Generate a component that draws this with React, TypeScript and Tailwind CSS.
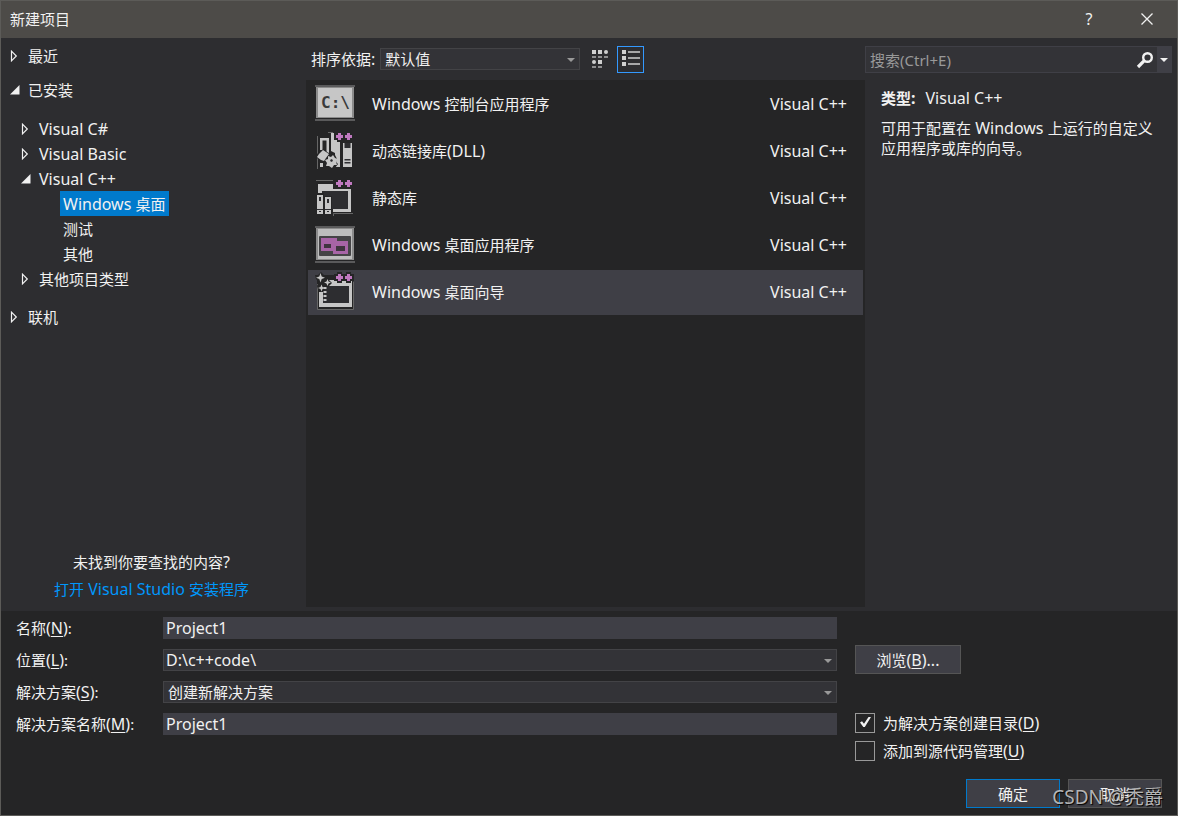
import { useState } from 'react'
import type { ReactNode } from 'react'

interface TemplateItem {
  id: string
  name: string
  icon: ReactNode
}

// Latin runs are set one step larger than the Chinese text around them
function Mixed({ text }: { text: string }) {
  return (
    <>
      {text.split(/([\x20-\x7e]+)/).map((part, i) =>
        i % 2 === 1 ? (
          <span key={i} className="text-base/5">
            {part}
          </span>
        ) : (
          part
        ),
      )}
    </>
  )
}

function AccessLabel({ text, accessKey }: { text: string; accessKey: string }) {
  return (
    <>
      {text}
      <span className="text-base/5">
        (<u className="underline-offset-2">{accessKey}</u>)
      </span>
    </>
  )
}

function TreeArrow({ open }: { open: boolean }) {
  return (
    <svg width="10" height="12" viewBox="0 0 10 12" className="shrink-0">
      {open ? (
        <path d="M9.5 1v9.500H0z" fill="#f1f1f1" />
      ) : (
        <path d="M1.500 1.200v9.600L6.300 6z" fill="none" stroke="#f1f1f1" strokeWidth="1.200" />
      )}
    </svg>
  )
}

function Caret({ className }: { className: string }) {
  return (
    <svg width="8" height="4" viewBox="0 0 8 4" className={className}>
      <path d="M0 0h8L4 4z" fill="currentColor" />
    </svg>
  )
}

function PlusPlus() {
  return (
    <>
      <path d="M19 2h3V0h5v2h4V0h5v2h3v7h-3v2h-5V9h-4v2h-5V9h-3z" fill="#252526" />
      <path
        d="M23 2h3v2h2v3h-2v2h-3V7h-2V4h2zM32 2h3v2h2v3h-2v2h-3V7h-2V4h2z"
        fill="#c079c0"
      />
    </>
  )
}

function ConsoleIcon() {
  return (
    <svg width="40" height="40" viewBox="0 0 40 40">
      <path d="M0 1h40v2H0zM0 35h40v2H0z" fill="#5a5a5b" />
      <rect x="1" y="3" width="38" height="31" fill="#8b8b8b" />
      <rect x="3" y="4" width="34" height="29" fill="#c6c6c6" />
      <text
        x="6"
        y="24"
        fontSize="16"
        fontWeight="700"
        fill="#3a3a3b"
        fontFamily="'DejaVu Sans Mono', monospace"
      >
        {'C:\\'}
      </text>
    </svg>
  )
}

function DllIcon() {
  return (
    <svg width="40" height="40" viewBox="0 0 40 40">
      <path d="M2.500 5v33M13 1.500h5" stroke="#666" fill="none" />
      <path d="M5 7h9v15h-2.500V9.500h-4V19H5z" fill="#c6c6c6" />
      <path d="M16 2h4v7h5v27h-5V22l-4-2z" fill="#c6c6c6" />
      <path d="M28 12h9v24h-9z" fill="#c6c6c6" />
      <path d="M29.500 12h6v5h-6zM29.500 28h6v1.500h-6zM29.500 31h6v1.500h-6z" fill="#2d2d30" />
      <PlusPlus />
      <path
        d="M7 19l2-1 3 3 2 1 1 3 3-2 2 1 2 4-1 3 2 2-3 4-4 1-4-2-3 0 1-5-2-2-3 1-4-4 1-3z"
        fill="#252526"
      />
      <path d="M8 19l3 2 3 2-3 4-2 3-3-1-4-3 2-3z" fill="#c6c6c6" />
      <path
        d="M13 25l3 1 2-2 2 3 3 1-2 3 1 3-3 0-2 3-3-2-3 0 1-3-2-3 3-1z"
        fill="#c6c6c6"
      />
      <path d="M15 29l2-1 1 2-2 1z" fill="#2d2d30" />
      <path d="M5 32h3v4H5z" fill="#c6c6c6" />
    </svg>
  )
}

function StaticLibIcon() {
  return (
    <svg width="40" height="40" viewBox="0 0 40 40">
      <path d="M1 2.500h17M18.500 38v-2.500H38" stroke="#666" fill="none" />
      <path d="M3 6h15v5h18v23H18v-3h15V13H7v3H3z" fill="#c6c6c6" />
      <path d="M7 13h26v18H7z" fill="#2d2d30" />
      <path d="M1 15h8v3h8v19H1z" fill="#252526" />
      <path d="M2 17h6v19H2zM10 19h6v17h-6z" fill="#c6c6c6" />
      <path
        d="M4 19h2v4H4zM12 21h2v4h-2zM2 31h6v1H2zM10 31h6v1h-6zM4 33h2v1H4zM12 33h2v1h-2z"
        fill="#2d2d30"
      />
      <PlusPlus />
    </svg>
  )
}

function DesktopAppIcon() {
  return (
    <svg width="40" height="40" viewBox="0 0 40 40">
      <path d="M0 1h40v2H0zM0 36h40v2H0z" fill="#5a5a5b" />
      <rect x="1" y="3" width="38" height="32" fill="#8b8b8b" />
      <rect x="3" y="4" width="34" height="30" fill="#bdbdbd" />
      <rect x="4" y="11" width="32" height="20" rx="1" fill="#454446" />
      <path d="M6 13h16v3h11v13H18v-3H6z" fill="#a764a6" />
      <path d="M9 19h7v4H9zM21 21h9v5h-9z" fill="#3f343f" />
    </svg>
  )
}

function WizardIcon() {
  return (
    <svg width="40" height="40" viewBox="0 0 40 40">
      <path d="M2 3h36v34H2z" fill="#252526" />
      <path d="M2.500 12v25.500h36V10" fill="none" stroke="#666" />
      <path d="M4 8h33v27H4z" fill="#c6c6c6" />
      <path d="M8 14h26v17H8z" fill="#2d2d30" />
      <path d="M0 3h3l3-3 3 3h3l1 4 4 4-4 4-3 1-1 4H4l-2-6 2-4-3-3z" fill="#252526" />
      <path
        d="M5.500 1l1.200 3.500L10 5.700 6.700 7l-1.200 3.500L4.300 7 1 5.700l3.300-1.200zM12.500 7l1 2.500 2.500 1-2.500 1-1 2.500-1-2.500-2.500-1 2.500-1zM6.500 12.500l1 2.500 2.500 1-2.500 1-1 2.500-1-2.500-2.500-1 2.500-1z"
        fill="#c6c6c6"
      />
      <path d="M10 15v16" stroke="#c6c6c6" strokeWidth="3" strokeDasharray="2 2" />
      <PlusPlus />
    </svg>
  )
}

const TEMPLATES: TemplateItem[] = [
  { id: 'console', name: 'Windows 控制台应用程序', icon: <ConsoleIcon /> },
  { id: 'dll', name: '动态链接库(DLL)', icon: <DllIcon /> },
  { id: 'lib', name: '静态库', icon: <StaticLibIcon /> },
  { id: 'desktop', name: 'Windows 桌面应用程序', icon: <DesktopAppIcon /> },
  { id: 'wizard', name: 'Windows 桌面向导', icon: <WizardIcon /> },
]

function TreeNode({ label, open = false }: { label: string; open?: boolean }) {
  return (
    <button type="button" className="flex h-[25px] items-center gap-2 text-left">
      <TreeArrow open={open} />
      <span>
        <Mixed text={label} />
      </span>
    </button>
  )
}

function TitleBar() {
  return (
    <header className="flex h-[37px] items-center bg-[#4d4b48] pb-[2px] pl-[9px]">
      <h1 className="flex-1">新建项目</h1>
      <button type="button" aria-label="帮助" className="flex w-14 justify-center">
        <span className="text-base/5">?</span>
      </button>
      <button type="button" aria-label="关闭" className="flex w-[60px] justify-center">
        <svg width="12" height="12" viewBox="0 0 12 12">
          <path d="M.5.5l11 11M11.500.5l-11 11" stroke="#f1f1f1" strokeWidth="1.300" />
        </svg>
      </button>
    </header>
  )
}

function Sidebar() {
  return (
    <nav className="flex w-[305px] shrink-0 flex-col pt-[5px] pb-2">
      <ul className="pl-[9px]">
        <li className="mb-[9px]">
          <TreeNode label="最近" />
        </li>
        <li className="mb-[13px]">
          <TreeNode label="已安装" open />
          <ul className="mt-[14px] pl-[11px]">
            <li>
              <TreeNode label="Visual C#" />
            </li>
            <li>
              <TreeNode label="Visual Basic" />
            </li>
            <li>
              <TreeNode label="Visual C++" open />
              <ul className="flex flex-col items-start pl-[39px]">
                {['Windows 桌面', '测试', '其他'].map((label, i) => (
                  <li key={label} className="flex">
                    <button
                      type="button"
                      className={`h-[25px] px-[3px] ${i === 0 ? 'bg-[#007acc]' : ''}`}
                    >
                      <Mixed text={label} />
                    </button>
                  </li>
                ))}
              </ul>
            </li>
            <li>
              <TreeNode label="其他项目类型" />
            </li>
          </ul>
        </li>
        <li>
          <TreeNode label="联机" />
        </li>
      </ul>
      <div className="mt-auto flex flex-col items-center pr-1 leading-[27px]">
        <p>
          <Mixed text="未找到你要查找的内容?" />
        </p>
        <a href="#installer" className="text-[#0097fb]">
          <Mixed text="打开 Visual Studio 安装程序" />
        </a>
      </div>
    </nav>
  )
}

function TemplatePane() {
  const [selected, setSelected] = useState('wizard')

  return (
    <section className="flex min-w-0 flex-1 flex-col pb-1">
      <div className="flex h-[42px] items-center pl-[5px]">
        <label htmlFor="sort" className="mr-[5px]">
          <Mixed text="排序依据:" />
        </label>
        <div className="relative w-[200px]">
          <select
            id="sort"
            className="block h-[22px] w-full appearance-none border border-[#434346] bg-[#333337] px-1 leading-5"
          >
            <option>默认值</option>
          </select>
          <Caret className="pointer-events-none absolute top-[10px] right-[5px] text-[#999999]" />
        </div>
        <button
          type="button"
          aria-label="小图标"
          className="ml-[6px] flex size-[27px] items-center justify-center"
        >
          <svg width="18" height="18" viewBox="0 0 18 18" fill="#d0d0d0">
            <path d="M1 0h4v4H1zM7 0h4v4H7zM7 10h4v4H7z" />
            <circle cx="15" cy="2" r="2" />
            <circle cx="3" cy="12" r="2" />
            <path d="M1 6h4v2H1zM7 6h4v2H7zM13 6h4v2h-4zM1 16h4v2H1zM7 16h4v2H7z" opacity=".6" />
          </svg>
        </button>
        <button
          type="button"
          aria-label="列表"
          className="ml-1 flex size-[27px] items-center justify-center border border-[#3399ff]"
        >
          <svg width="18" height="18" viewBox="0 0 18 18" fill="#d0d0d0">
            <path d="M0 0h4v4H0zM0 6h4v4H0zM0 12h4v4H0z" />
            <path d="M6 1h12v2H6zM6 7h12v2H6zM6 13h12v2H6z" opacity=".75" />
          </svg>
        </button>
      </div>
      <ul className="flex flex-1 flex-col gap-[2px] bg-[#252526] p-[2px]">
        {TEMPLATES.map((item) => (
          <li key={item.id}>
            <button
              type="button"
              onClick={() => setSelected(item.id)}
              className={`flex h-[45px] w-full items-center pr-4 pb-px pl-[7px] text-left ${
                selected === item.id ? 'bg-[#3f3f46]' : ''
              }`}
            >
              {item.icon}
              <span className="ml-[17px] flex-1">
                <Mixed text={item.name} />
              </span>
              <span className="text-base/5">Visual C++</span>
            </button>
          </li>
        ))}
      </ul>
    </section>
  )
}

function DetailsPane() {
  return (
    <aside className="w-[312px] shrink-0 pt-2 pr-[5px]">
      <div className="flex h-[27px] border border-[#3f3f46] bg-[#333337]">
        <input
          type="text"
          aria-label="搜索"
          placeholder="搜索(Ctrl+E)"
          className="min-w-0 flex-1 bg-transparent pl-1 outline-none placeholder:text-[#999999]"
        />
        <button type="button" aria-label="搜索" className="flex w-6 items-center justify-center">
          <svg width="18" height="18" viewBox="0 0 18 18" fill="none" stroke="#f1f1f1">
            <circle cx="11.500" cy="6.500" r="4.300" strokeWidth="2.400" />
            <path d="M8.300 9.700L2 16" strokeWidth="3.200" />
          </svg>
        </button>
        <button
          type="button"
          aria-label="搜索选项"
          className="flex w-[14px] items-center justify-center bg-[#3f3f46]"
        >
          <Caret className="text-[#f1f1f1]" />
        </button>
      </div>
      <div className="pt-[15px] pr-2 pl-4">
        <p className="flex gap-[10px] leading-5">
          <strong>
            <Mixed text="类型:" />
          </strong>
          <span className="text-base/5">Visual C++</span>
        </p>
        <p className="mt-[10px] leading-5">
          <Mixed text="可用于配置在 Windows 上运行的自定义应用程序或库的向导。" />
        </p>
      </div>
    </aside>
  )
}

function FormFields() {
  return (
    <div className="grid flex-1 auto-rows-[22px] grid-cols-[147px_1fr] content-start items-center gap-y-[10px] pt-[6px]">
      <label htmlFor="name">
        <AccessLabel text="名称" accessKey="N" />:
      </label>
      <input
        id="name"
        type="text"
        defaultValue="Project1"
        className="h-[22px] w-full bg-[#3f3f46] px-[3px] text-base/5 outline-none"
      />

      <label htmlFor="location">
        <AccessLabel text="位置" accessKey="L" />:
      </label>
      <div className="relative">
        <select
          id="location"
          className="block h-[22px] w-full appearance-none border border-[#434346] bg-[#333337] px-[2px] text-base/5"
        >
          <option>D:\c++code\</option>
        </select>
        <Caret className="pointer-events-none absolute top-[10px] right-[5px] text-[#999999]" />
      </div>

      <label htmlFor="solution">
        <AccessLabel text="解决方案" accessKey="S" />:
      </label>
      <div className="relative">
        <select
          id="solution"
          className="block h-[22px] w-full appearance-none border border-[#434346] bg-[#333337] px-1 leading-5"
        >
          <option>创建新解决方案</option>
        </select>
        <Caret className="pointer-events-none absolute top-[10px] right-[5px] text-[#999999]" />
      </div>

      <label htmlFor="solution-name">
        <AccessLabel text="解决方案名称" accessKey="M" />:
      </label>
      <input
        id="solution-name"
        type="text"
        defaultValue="Project1"
        className="h-[22px] w-full bg-[#3f3f46] px-[3px] text-base/5 outline-none"
      />
    </div>
  )
}

function Checkbox({ children, checked = false }: { children: ReactNode; checked?: boolean }) {
  return (
    <label className="flex h-5 items-center gap-2">
      <span className="relative flex size-5">
        <input
          type="checkbox"
          defaultChecked={checked}
          className="peer size-5 appearance-none border border-[#999999]"
        />
        <svg
          width="20"
          height="20"
          viewBox="0 0 20 20"
          className="pointer-events-none invisible absolute inset-0 peer-checked:visible"
        >
          <path d="M5 9.500l2-1.200 2 2.500L13.500 4H16L9.800 14H8.300z" fill="#f1f1f1" />
        </svg>
      </span>
      <span>{children}</span>
    </label>
  )
}

function Footer() {
  return (
    <form className="relative flex gap-[18px] bg-[#252526] pr-[15px] pb-[7px] pl-[15px]">
      <FormFields />
      <div className="flex w-[307px] shrink-0 flex-col pt-[34px]">
        <button
          type="button"
          className="h-[29px] w-[106px] border border-[#555555] bg-[#3f3f46]"
        >
          <AccessLabel text="浏览" accessKey="B" />
          <span className="text-base/5">...</span>
        </button>
        <div className="mt-[39px] flex flex-col gap-2">
          <Checkbox checked>
            <AccessLabel text="为解决方案创建目录" accessKey="D" />
          </Checkbox>
          <Checkbox>
            <AccessLabel text="添加到源代码管理" accessKey="U" />
          </Checkbox>
        </div>
        <div className="mt-[18px] flex justify-end gap-2">
          <button type="button" className="h-[29px] w-[94px] border border-[#007acc] bg-[#3f3f46]">
            确定
          </button>
          <button type="button" className="h-[29px] w-[94px] border border-[#555555] bg-[#3f3f46]">
            取消
          </button>
        </div>
      </div>
      <span className="pointer-events-none absolute right-[14px] bottom-1 text-[19px]/7 text-[#c8c8c8]/90 [text-shadow:1px_1px_1px_#000]">
        CSDN @秃爵
      </span>
    </form>
  )
}

export default function App() {
  return (
    <div className="flex min-h-screen flex-col border border-[#5c5b58] bg-[#2d2d30] font-['Noto_Sans','Noto_Sans_CJK_SC',sans-serif] text-[15px]/5 text-[#f1f1f1]">
      <TitleBar />
      <main className="flex flex-1">
        <Sidebar />
        <TemplatePane />
        <DetailsPane />
      </main>
      <Footer />
    </div>
  )
}
